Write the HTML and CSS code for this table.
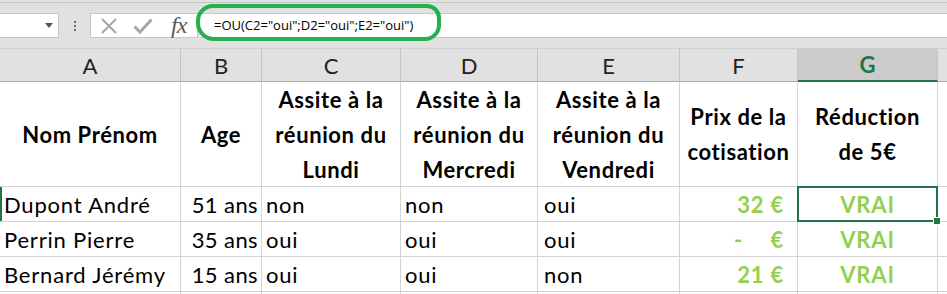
FILE: index.html
```html
<!DOCTYPE html>
<html lang="fr">
<head>
<meta charset="utf-8">
<title>Classeur - Réunions</title>
<link rel="stylesheet" href="styles.css">
</head>
<body>
<div class="app">
  <div class="ribbon-edge"></div>

  <div class="formula-bar">
    <div class="name-box">
      <svg class="caret" width="8" height="5" viewBox="0 0 8 5"><path d="M0 0h8L4 5z" fill="#555"/></svg>
    </div>
    <div class="grip">
      <span></span><span></span><span></span>
    </div>
    <div class="fx-box">
      <svg class="ico" width="18" height="18" viewBox="0 0 18 18"><path d="M2 2L16 16M16 2L2 16" stroke="#a6a6a6" stroke-width="2" fill="none"/></svg>
      <svg class="ico" width="20" height="18" viewBox="0 0 20 18"><path d="M1.5 9.5L7 15L18.5 2.5" stroke="#a6a6a6" stroke-width="3" fill="none"/></svg>
      <span class="fx">fx</span>
    </div>
    <div class="formula-input">=OU(C2="oui";D2="oui";E2="oui")</div>
  </div>

  <div class="bar-gap"></div>

  <div class="sheet">
    <div class="ch">A</div>
    <div class="ch">B</div>
    <div class="ch">C</div>
    <div class="ch">D</div>
    <div class="ch">E</div>
    <div class="ch">F</div>
    <div class="ch ch-active">G</div>
    <div class="ch ch-last"></div>

    <div class="c head">Nom Prénom</div>
    <div class="c head">Age</div>
    <div class="c head">Assite à la<br>réunion du<br>Lundi</div>
    <div class="c head">Assite à la<br>réunion du<br>Mercredi</div>
    <div class="c head">Assite à la<br>réunion du<br>Vendredi</div>
    <div class="c head">Prix de la<br>cotisation</div>
    <div class="c head">Réduction<br>de 5€</div>
    <div class="c last"></div>

    <div class="c txt row-active">Dupont André</div>
    <div class="c num">51 ans</div>
    <div class="c txt">non</div>
    <div class="c txt">non</div>
    <div class="c txt pad-e">oui</div>
    <div class="c money">32 €</div>
    <div class="c bool selected">VRAI</div>
    <div class="c last"></div>

    <div class="c txt">Perrin Pierre</div>
    <div class="c num">35 ans</div>
    <div class="c txt">oui</div>
    <div class="c txt">oui</div>
    <div class="c txt pad-e">oui</div>
    <div class="c money zero"><span class="dash">-</span><span>€</span></div>
    <div class="c bool">VRAI</div>
    <div class="c last"></div>

    <div class="c txt">Bernard Jérémy</div>
    <div class="c num">15 ans</div>
    <div class="c txt">oui</div>
    <div class="c txt">oui</div>
    <div class="c txt pad-e">non</div>
    <div class="c money">21 €</div>
    <div class="c bool">VRAI</div>
    <div class="c last"></div>

    <div class="c tail"></div>
    <div class="c tail"></div>
    <div class="c tail"></div>
    <div class="c tail"></div>
    <div class="c tail"></div>
    <div class="c tail"></div>
    <div class="c tail"></div>
    <div class="c tail last"></div>
  </div>

  <div class="callout"></div>
</div>
</body>
</html>
```

FILE: styles.css
```css
* { box-sizing: border-box; }

html, body {
  margin: 0;
  padding: 0;
  background: #ffffff;
}

.app {
  position: relative;
  width: 947px;
  height: 294px;
  overflow: hidden;
  font-family: Lato, "Liberation Sans", sans-serif;
  color: #000;
}

/* strip under the ribbon */
.ribbon-edge {
  height: 13px;
  background: #e1e1e1;
  border-top: 2px solid #e1e1e1;
  box-shadow: inset 0 1px 0 #c6c6c6;
}

/* formula bar */
.formula-bar {
  height: 25px;
  display: flex;
  background: #e1e1e1;
}

.name-box {
  width: 59px;
  background: #fff;
  border: 1px solid #c6c6c6;
  border-left: none;
  display: flex;
  align-items: center;
  justify-content: flex-end;
  padding-right: 5px;
}

.grip {
  width: 31px;
  display: flex;
  flex-direction: column;
  align-items: center;
  justify-content: center;
  gap: 2px;
}
.grip span {
  width: 2px;
  height: 2px;
  background: #6a6a6a;
}

.fx-box {
  width: 108px;
  background: #fff;
  border: 1px solid #c6c6c6;
  display: flex;
  align-items: center;
  padding-left: 9px;
  gap: 15px;
}
.fx-box .ico { display: block; }
.fx {
  font-family: "Liberation Serif", serif;
  font-style: italic;
  font-size: 24px;
  color: #595959;
  margin-left: 3px;
  letter-spacing: -1px;
  line-height: 1;
  margin-top: -2px;
}

.formula-input {
  flex: 1;
  background: #fff;
  border-top: 1px solid #c6c6c6;
  border-bottom: 1px solid #c6c6c6;
  margin-left: 2px;
  padding-left: 14px;
  font-family: "Open Sans", sans-serif;
  font-size: 13px;
  line-height: 23px;
  white-space: nowrap;
}

.bar-gap {
  height: 10px;
  background: #e1e1e1;
}

/* worksheet grid */
.sheet {
  display: grid;
  grid-template-columns: 181px 81px 139px 137px 142px 118px 140px 9px;
  grid-template-rows: 34px 105px 35px 35px 35px 20px;
  font-size: 22px;
  letter-spacing: 0.8px;
}

.ch {
  background: #e1e1e1;
  border-top: 1px solid #d0d0d0;
  border-right: 1px solid #c4c4c4;
  border-bottom: 1px solid #ababab;
  display: flex;
  align-items: center;
  justify-content: center;
  font-size: 22px;
  letter-spacing: 0;
  color: #222;
}
.ch-active {
  background: #cbcbcb;
  border-bottom: 2px solid #217346;
  color: #217346;
  font-weight: 700;
}
.ch-last { border-right: none; }

.c {
  border-right: 1px solid #d4d4d4;
  border-bottom: 1px solid #d4d4d4;
  display: flex;
  align-items: center;
  white-space: nowrap;
}
.c.last { border-right: none; }

.head {
  justify-content: center;
  text-align: center;
  font-weight: 700;
  line-height: 35px;
  letter-spacing: 0.6px;
}

.txt { padding-left: 4px; }
.pad-e { padding-left: 6px; }

.num {
  justify-content: flex-end;
  padding-right: 3px;
  letter-spacing: 0.4px;
}

.money {
  justify-content: flex-end;
  padding-right: 13px;
  color: #92d050;
  font-weight: 700;
}
.money.zero { justify-content: space-between; padding-left: 54px; }

.bool {
  justify-content: center;
  color: #92d050;
  font-weight: 700;
}

.row-active { box-shadow: inset 2px 0 0 #217346; }

.selected { position: relative; }
.selected::after {
  content: "";
  position: absolute;
  left: -1px;
  top: -1px;
  right: -1px;
  bottom: -1px;
  border: 2px solid #217346;
}
.selected::before {
  content: "";
  position: absolute;
  right: -4px;
  bottom: -4px;
  width: 6px;
  height: 6px;
  background: #217346;
  border: 1px solid #fff;
  z-index: 1;
}

/* hand-drawn highlight around the formula */
.callout {
  position: absolute;
  left: 196px;
  top: 4px;
  width: 245px;
  height: 37px;
  border: 4px solid #22b14c;
  border-radius: 17px 14px 16px 18px;
}
```
